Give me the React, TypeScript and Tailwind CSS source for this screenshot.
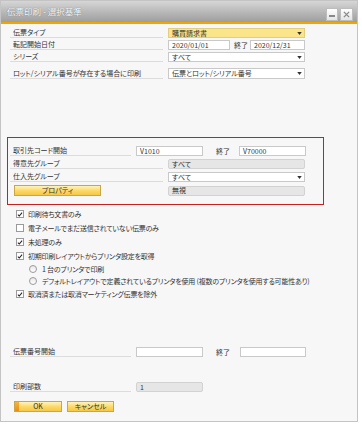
import React from "react";

const font = "font-['Noto_Sans_CJK_JP','Noto_Sans',sans-serif] [font-feature-settings:'palt']";

function Arrow() {
  return (
    <svg viewBox="0 0 6 4" className="h-[3px] w-[5px]">
      <path d="M0 0h6L3 4z" fill="#333" />
    </svg>
  );
}

function Label({ text, w = "w-[153px]" }: { text: string; w?: string }) {
  return (
    <div className={`${w} h-full border-b border-[#dcdcdc] pl-[3px] flex items-end leading-none pb-[1px]`}>
      <span>{text}</span>
    </div>
  );
}

function Field({
  value = "",
  w,
  kind = "input",
  arrow = false,
}: {
  value?: string;
  w: string;
  kind?: "input" | "yellow" | "gray";
  arrow?: boolean;
}) {
  const bg =
    kind === "yellow"
      ? "bg-[#fbe58a] border-[#e2cf7e]"
      : kind === "gray"
        ? "bg-[#e6e6e6] border-[#d2d2d2] rounded-[2px]"
        : "bg-white border-[#c9c9c9]";
  return (
    <div className={`${w} h-[10px] border ${bg} flex items-center justify-between pl-[3px] pr-[2px] leading-none`}>
      <span>{value}</span>
      {arrow && <Arrow />}
    </div>
  );
}

function Check({ checked }: { checked: boolean }) {
  return (
    <div className="w-[8px] h-[8px] border border-[#9a9a9a] bg-white flex items-center justify-center shrink-0">
      {checked && (
        <svg viewBox="0 0 8 8" className="w-[7px] h-[7px]">
          <path d="M1.2 4.2 3 6 6.8 1.6" stroke="#222" strokeWidth="1.4" fill="none" />
        </svg>
      )}
    </div>
  );
}

function Radio() {
  return (
    <div className="w-[8px] h-[8px] rounded-full border border-[#9a9a9a] bg-gradient-to-b from-[#e8e8e8] to-white shrink-0" />
  );
}

function YButton({ text, w, accent = false }: { text: string; w: string; accent?: boolean }) {
  return (
    <div
      className={`${w} h-[11px] border border-[#c9a64a] bg-gradient-to-b from-[#fff3b8] via-[#fcd96a] to-[#f6c743] flex items-center leading-none relative`}
    >
      {accent && <div className="absolute left-0 top-0 bottom-0 w-[4px] bg-gradient-to-b from-[#f7b23a] to-[#e8900e]" />}
      <span className="w-full text-center">{text}</span>
    </div>
  );
}

export default function App() {
  return (
    <div className={`w-[362px] h-[425px] bg-white text-[7px] text-[#333] ${font}`}>
      <div className="w-[358px] h-[422px] border border-[#c4c4c4] bg-[#f7f7f7] flex flex-col">
        {/* title bar */}
        <div className="h-[21px] bg-gradient-to-b from-[#d6d6d6] to-[#9e9e9e] flex items-center justify-between pl-[6px] pr-[4px]">
          <span className="text-[8.5px] text-white [text-shadow:0_0_1px_#555] leading-none">伝票印刷 - 選択基準</span>
          <div className="flex gap-[2px] mt-[5px]">
            <div className="w-[12px] h-[13px] bg-gradient-to-b from-white to-[#e4e4e4] border border-[#bdbdbd] flex items-end justify-center pb-[3px]">
              <div className="w-[6px] h-[1.5px] bg-[#888]" />
            </div>
            <div className="w-[13px] h-[13px] bg-gradient-to-b from-white to-[#e4e4e4] border border-[#bdbdbd] flex items-center justify-center">
              <svg viewBox="0 0 8 8" className="w-[7px] h-[7px]">
                <path d="M1 1 7 7M7 1 1 7" stroke="#888" strokeWidth="1.5" />
              </svg>
            </div>
          </div>
        </div>
        <div className="h-[2px] bg-[#f0a500]" />

        {/* top criteria */}
        <div className="pl-[9px] mt-[4px] flex flex-col gap-[2px]">
          <div className="flex h-[10px] gap-[5px]">
            <Label text="伝票タイプ" />
            <Field w="w-[137px]" kind="yellow" value="購買請求書" arrow />
          </div>
          <div className="flex h-[10px] gap-[5px]">
            <Label text="転記開始日付" />
            <div className="flex items-center">
              <Field w="w-[62px]" value="2020/01/01" />
              <span className="w-[20px] pl-[4px] leading-none">終了</span>
              <Field w="w-[55px]" value="2020/12/31" />
            </div>
          </div>
          <div className="flex h-[10px] gap-[5px]">
            <Label text="シリーズ" />
            <Field w="w-[137px]" value="すべて" arrow />
          </div>
          <div className="flex h-[11px] gap-[5px] mt-[4px]">
            <Label text="ロット/シリアル番号が存在する場合に印刷" />
            <div className="w-[137px] h-[11px] border bg-white border-[#c9c9c9] flex items-center justify-between pl-[3px] pr-[2px] leading-none">
              <span>伝票とロット/シリアル番号</span>
              <Arrow />
            </div>
          </div>
        </div>

        {/* red box */}
        <div className="ml-[6px] mt-[58px] w-[317px] h-[68px] border border-[#c8201e] pl-[2px] pt-[8px] flex flex-col gap-[3px]">
          <div className="flex h-[10px] gap-[5px]">
            <Label text="取引先コード開始" w="w-[121px]" />
            <div className="flex items-center">
              <Field w="w-[67px]" value="V1010" />
              <span className="w-[36px] pl-[13px] leading-none">終了</span>
              <Field w="w-[67px]" value="V70000" />
            </div>
          </div>
          <div className="flex h-[10px] gap-[5px]">
            <Label text="得意先グループ" />
            <Field w="w-[137px]" kind="gray" value="すべて" />
          </div>
          <div className="flex h-[10px] gap-[5px]">
            <Label text="仕入先グループ" />
            <Field w="w-[137px]" value="すべて" arrow />
          </div>
          <div className="flex h-[11px] items-center">
            <div className="w-[158px] pl-[4px]">
              <YButton text="プロパティ" w="w-[87px]" />
            </div>
            <Field w="w-[137px]" kind="gray" value="無視" />
          </div>
        </div>

        {/* checkboxes */}
        <div className="pl-[15px] mt-[2px] flex flex-col leading-none tracking-[-0.2px]">
          <div className="flex items-center gap-[4px] h-[14px]">
            <Check checked />
            <span>印刷待ち文書のみ</span>
          </div>
          <div className="flex items-center gap-[4px] h-[14px]">
            <Check checked={false} />
            <span>電子メールでまだ送信されていない伝票のみ</span>
          </div>
          <div className="flex items-center gap-[4px] h-[14px]">
            <Check checked />
            <span>未処理のみ</span>
          </div>
          <div className="flex items-center gap-[4px] h-[14px]">
            <Check checked />
            <span>初期印刷レイアウトからプリンタ設定を取得</span>
          </div>
          <div className="flex items-center gap-[5px] h-[12px] pl-[13px]">
            <Radio />
            <span>1 台のプリンタで印刷</span>
          </div>
          <div className="flex items-center gap-[5px] h-[12px] pl-[13px]">
            <Radio />
            <span>デフォルトレイアウトで定義されているプリンタを使用 (複数のプリンタを使用する可能性あり)</span>
          </div>
          <div className="flex items-center gap-[4px] h-[14px]">
            <Check checked />
            <span>取消済または取消マーケティング伝票を除外</span>
          </div>
        </div>

        {/* bottom */}
        <div className="pl-[9px] mt-[46px] flex flex-col">
          <div className="flex h-[10px] gap-[5px]">
            <Label text="伝票番号開始" w="w-[121px]" />
            <div className="flex items-center">
              <Field w="w-[67px]" value="" />
              <span className="w-[37px] pl-[13px] leading-none">終了</span>
              <Field w="w-[66px]" value="" />
            </div>
          </div>
          <div className="flex h-[10px] gap-[5px] mt-[25px]">
            <Label text="印刷部数" w="w-[121px]" />
            <Field w="w-[67px]" kind="gray" value="1" />
          </div>
          <div className="flex gap-[5px] mt-[9px] pl-[4px]">
            <YButton text="OK" w="w-[48px]" accent />
            <YButton text="キャンセル" w="w-[47px]" />
          </div>
        </div>
      </div>
    </div>
  );
}
